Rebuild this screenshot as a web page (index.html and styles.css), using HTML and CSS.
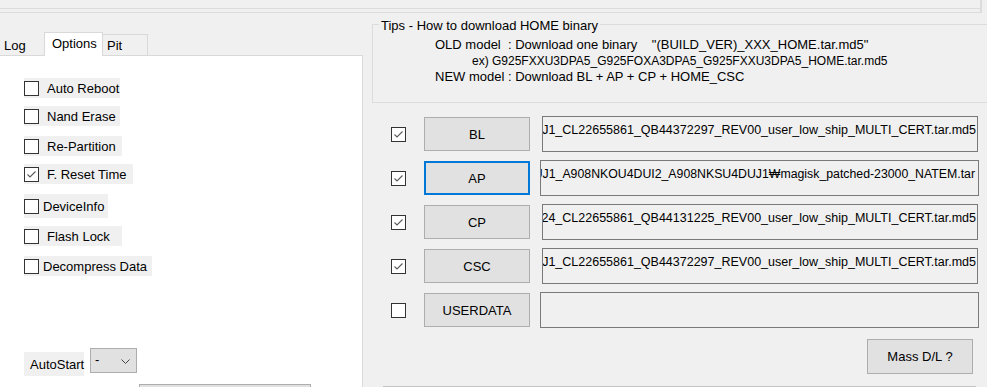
FILE: index.html
```html
<!DOCTYPE html>
<html>
<head>
<meta charset="utf-8">
<title>Odin</title>
<link rel="stylesheet" href="styles.css">
</head>
<body>
<div class="topframe"><div class="topframe-inner"></div></div>
<div class="main">
  <div class="left">
    <div class="tabs">
      <div class="tab tab-log">Log</div>
      <div class="tab tab-active">Options</div>
      <div class="tab tab-pit">Pit</div>
    </div>
    <div class="panel">
      <div class="opts">
        <div class="opt w96"><span class="cb"></span><span class="opt-text">Auto Reboot</span></div>
        <div class="opt w96 gap8"><span class="cb"></span><span class="opt-text">Nand Erase</span></div>
        <div class="opt w98 gap10"><span class="cb"></span><span class="opt-text">Re-Partition</span></div>
        <div class="opt w109 gap8"><span class="cb"><svg class="tick" viewBox="0 0 13 13" width="13" height="13"><polyline points="2.5,6.5 5,9 10.5,3.5" fill="none" stroke="#5a5a5a" stroke-width="1.1"/></svg></span><span class="opt-text">F. Reset Time</span></div>
        <div class="opt w84 tall gap10"><span class="cb"></span><span class="opt-text tight">DeviceInfo</span></div>
        <div class="opt w98 gap8"><span class="cb"></span><span class="opt-text">Flash Lock</span></div>
        <div class="opt w128 gap10"><span class="cb"></span><span class="opt-text tight">Decompress Data</span></div>
      </div>
      <div class="autostart">
        <div class="as-label">AutoStart</div>
        <div class="select"><span>-</span><svg class="chev" viewBox="0 0 9 5" width="9" height="5"><polyline points="0.5,0.5 4.5,4.5 8.5,0.5" fill="none" stroke="#444" stroke-width="1"/></svg></div>
      </div>
      <div class="panel-btn"></div>
    </div>
  </div>
  <div class="right">
    <div class="group">
      <div class="group-title">Tips - How to download HOME binary</div>
      <div class="tips">
        <div class="tip-line">OLD model  : Download one binary    "(BUILD_VER)_XXX_HOME.tar.md5"</div>
        <div class="tip-line tip-ex">ex) G925FXXU3DPA5_G925FOXA3DPA5_G925FXXU3DPA5_HOME.tar.md5</div>
        <div class="tip-line">NEW model : Download BL + AP + CP + HOME_CSC</div>
      </div>
    </div>
    <div class="rows">
      <div class="row">
        <span class="cb"><svg class="tick" viewBox="0 0 13 13" width="13" height="13"><polyline points="2.5,6.5 5,9 10.5,3.5" fill="none" stroke="#5a5a5a" stroke-width="1.1"/></svg></span>
        <div class="btn">BL</div>
        <div class="field"><span class="field-text">BL_A908NKSU4DUJ1_CL22655861_QB44372297_REV00_user_low_ship_MULTI_CERT.tar.md5</span></div>
      </div>
      <div class="row">
        <span class="cb"><svg class="tick" viewBox="0 0 13 13" width="13" height="13"><polyline points="2.5,6.5 5,9 10.5,3.5" fill="none" stroke="#5a5a5a" stroke-width="1.1"/></svg></span>
        <div class="btn btn-focus">AP</div>
        <div class="field wide"><span class="field-text">AP_A908NKSU4DUJ1_A908NKOU4DUI2_A908NKSU4DUJ1₩magisk_patched-23000_NATEM.tar</span></div>
      </div>
      <div class="row">
        <span class="cb"><svg class="tick" viewBox="0 0 13 13" width="13" height="13"><polyline points="2.5,6.5 5,9 10.5,3.5" fill="none" stroke="#5a5a5a" stroke-width="1.1"/></svg></span>
        <div class="btn">CP</div>
        <div class="field"><span class="field-text">CP_A908NKSU4DUI24_CL22655861_QB44131225_REV00_user_low_ship_MULTI_CERT.tar.md5</span></div>
      </div>
      <div class="row">
        <span class="cb"><svg class="tick" viewBox="0 0 13 13" width="13" height="13"><polyline points="2.5,6.5 5,9 10.5,3.5" fill="none" stroke="#5a5a5a" stroke-width="1.1"/></svg></span>
        <div class="btn">CSC</div>
        <div class="field"><span class="field-text">HOME_CSC_OKR_A908NOKR4DUJ1_CL22655861_QB44372297_REV00_user_low_ship_MULTI_CERT.tar.md5</span></div>
      </div>
      <div class="row">
        <span class="cb"></span>
        <div class="btn">USERDATA</div>
        <div class="field wide"></div>
      </div>
    </div>
    <div class="mass-row"><div class="btn btn-mass">Mass D/L ?</div></div>
    <div class="bottom-line"></div>
  </div>
</div>
</body>
</html>
```
FILE: styles.css
```css
* { box-sizing: border-box; }
html, body { margin: 0; padding: 0; }
body {
  width: 987px;
  height: 387px;
  overflow: hidden;
  background: #f0f0f0;
  font-family: "Liberation Sans", Arial, sans-serif;
  font-size: 13px;
  line-height: 15px;
  color: #000;
}

.topframe {
  width: 981px;
  height: 13px;
  border-right: 1px solid #dcdcdc;
  border-bottom: 1px solid #dcdcdc;
  box-shadow: 1px 0 0 #dcdcdc;
}
.topframe-inner {
  height: 9px;
  border-bottom: 1px solid #dcdcdc;
}

.main { display: flex; height: 374px; overflow: hidden; }

/* ---------- left ---------- */
.left { width: 363px; flex: none; display: flex; flex-direction: column; min-height: 0; }
.tabs {
  flex: none;
  height: 42px;
  display: flex;
  align-items: flex-end;
  position: relative;
  z-index: 1;
}
.tab { flex: none; height: 21px; }
.tab-log { width: 44px; padding: 4px 0 0 4px; }
.tab-active {
  width: 59px;
  height: 24px;
  margin-bottom: -1px;
  background: #fff;
  border: 1px solid #d9d9d9;
  border-bottom: none;
  padding: 3px 0 0 7px;
}
.tab-pit {
  width: 45px;
  border-top: 1px solid #d9d9d9;
  border-right: 1px solid #d9d9d9;
  padding: 3px 0 0 4px;
}

.panel {
  flex: 1;
  min-height: 0;
  overflow: hidden;
  background: #fff;
  border-top: 1px solid #d9d9d9;
  border-right: 1px solid #d9d9d9;
  padding-left: 24px;
  display: flex;
  flex-direction: column;
  align-items: flex-start;
}
.opts {
  flex: none;
  padding-top: 22px;
  display: flex;
  flex-direction: column;
  align-items: flex-start;
}
.opt {
  flex: none;
  display: flex;
  align-items: center;
  height: 20px;
  background: #f0f0f0;
}
.opt.tall { height: 24px; }
.gap8 { margin-top: 8px; }
.gap10 { margin-top: 10px; }
.w84 { width: 84px; }
.w96 { width: 96px; }
.w98 { width: 98px; }
.w109 { width: 109px; }
.w128 { width: 128px; }

.cb {
  flex: none;
  width: 15px;
  height: 15px;
  border: 1px solid #333;
  background: #fff;
  display: block;
}
.tick { display: block; }
.opt-text { margin-left: 8px; white-space: nowrap; }
.opt-text.tight { margin-left: 4px; }

.autostart {
  flex: none;
  margin-top: 72px;
  display: flex;
  align-items: flex-start;
}
.as-label {
  margin-top: 4px;
  width: 60px;
  height: 24px;
  background: #f0f0f0;
  padding-left: 6px;
  display: flex;
  align-items: center;
}
.select {
  margin-left: 6px;
  width: 47px;
  height: 25px;
  border: 1px solid #adadad;
  background: #e1e1e1;
  display: flex;
  justify-content: space-between;
  align-items: flex-start;
  padding: 3px 6px 0 4px;
}
.chev { margin-top: 7px; display: block; }
.panel-btn {
  flex: none;
  margin-top: 8px;
  margin-left: 115px;
  width: 172px;
  height: 30px;
  border: 1px solid #adadad;
  background: #e1e1e1;
}

/* ---------- right ---------- */
.right {
  flex: 1;
  min-width: 0;
  padding-left: 9px;
  display: flex;
  flex-direction: column;
  align-items: flex-start;
}
.group {
  flex: none;
  margin-top: 11px;
  width: 640px;
  height: 79px;
  border: 1px solid #dcdcdc;
  display: flex;
  flex-direction: column;
  align-items: flex-start;
}
.group-title {
  margin: -7px 0 0 6px;
  padding: 0 2px;
  background: #f0f0f0;
  white-space: nowrap;
}
.tips { margin-top: 4px; padding-left: 62px; }
.tip-line { white-space: pre; line-height: 16px; }
.tip-ex { padding-left: 37px; font-size: 12px; }

.rows { flex: none; margin-top: 13px; display: flex; flex-direction: column; }
.row {
  height: 44px;
  padding-left: 19px;
  display: flex;
  align-items: flex-start;
}
.row .cb { margin-top: 11px; }
.btn {
  flex: none;
  margin-left: 18px;
  margin-top: 1px;
  width: 106px;
  height: 34px;
  border: 1px solid #adadad;
  background: #e1e1e1;
  display: flex;
  align-items: center;
  justify-content: center;
}
.btn-focus { border: 2px solid #0078d7; }
.field {
  flex: none;
  margin-left: 12px;
  width: 436px;
  height: 36px;
  border: 1px solid #7a7a7a;
  background: #f0f0f0;
  overflow: hidden;
  display: flex;
  justify-content: flex-end;
  align-items: flex-start;
  padding: 6px 1px 0 2px;
}
.field.wide { margin-left: 10px; width: 439px; padding-right: 3px; }
.field-text { white-space: nowrap; font-size: 12.5px; }
.field.wide .field-text { font-size: 12.3px; }

.mass-row {
  flex: none;
  align-self: stretch;
  margin-top: 3px;
  padding-right: 14px;
  display: flex;
  justify-content: flex-end;
}
.btn-mass { margin: 0; height: 35px; }
.bottom-line {
  flex: none;
  margin-top: 12px;
  margin-left: 11px;
  width: 593px;
  border-top: 1px solid #c4c4c4;
}
```
